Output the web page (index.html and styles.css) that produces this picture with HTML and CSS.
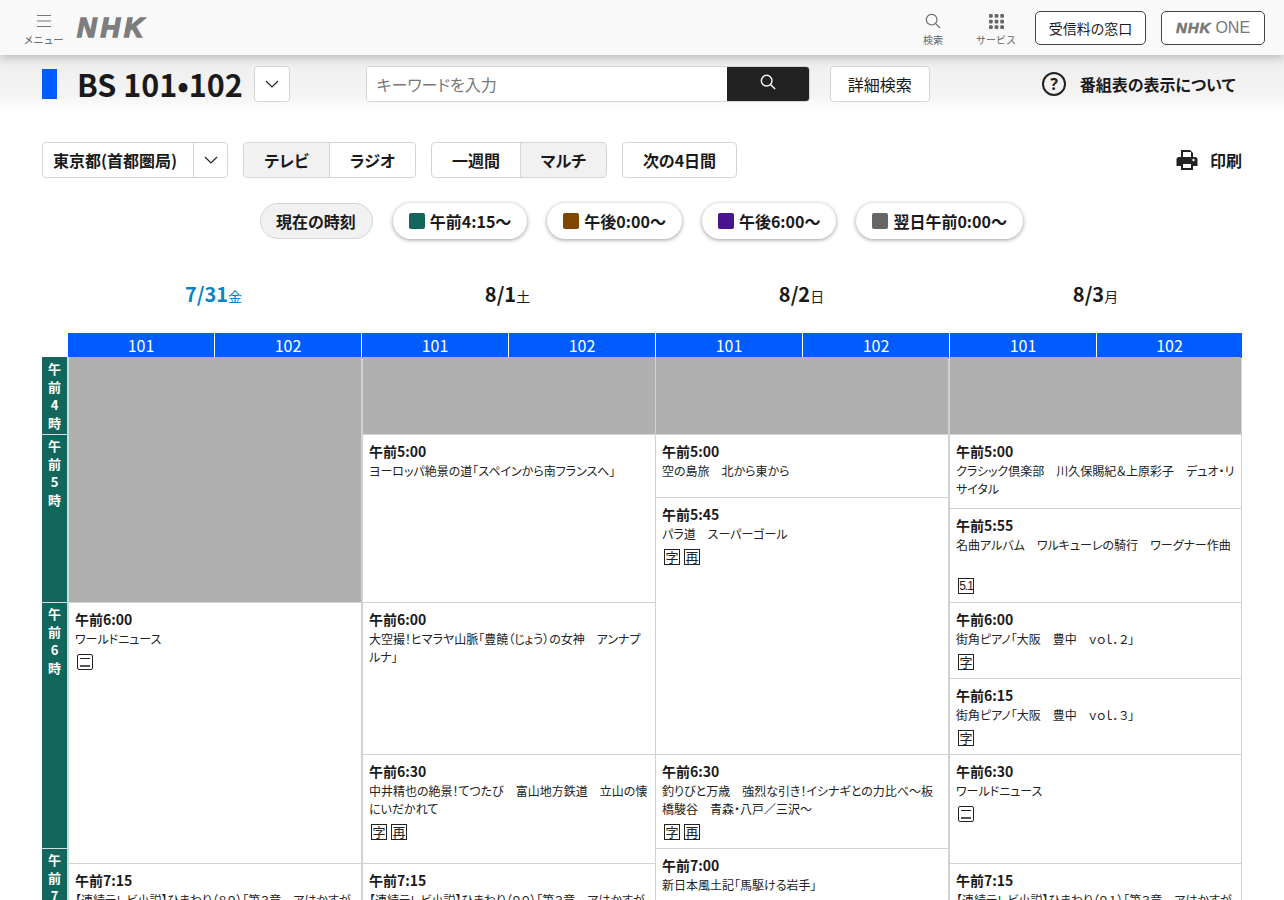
FILE: index.html
```html
<!DOCTYPE html>
<html lang="ja">
<head>
  <meta charset="UTF-8">
  <title>番組表 BS 101・102</title>
  <link rel="stylesheet" href="styles.css">
</head>
<body>

  <header class="top-bar">
    <div class="menu-btn">
      <svg width="14" height="14" viewBox="0 0 14 14"><path d="M0 1.5h14M0 7h14M0 12.5h14" stroke="#777" stroke-width="1.2" fill="none"/></svg>
      <span>メニュー</span>
    </div>
    <span class="nhk-logo">NHK</span>
    <div class="top-right">
      <div class="top-icon search-icon">
        <svg width="16" height="16" viewBox="0 0 18 18"><circle cx="7.5" cy="7.5" r="6" stroke="#666" stroke-width="1.3" fill="none"/><path d="M12 12l5 5" stroke="#666" stroke-width="1.3"/></svg>
        <span>検索</span>
      </div>
      <div class="top-icon service-icon">
        <svg width="15" height="15" viewBox="0 0 16 16" fill="#666"><rect width="4" height="4" rx="1"/><rect x="6" width="4" height="4" rx="1"/><rect x="12" width="4" height="4" rx="1"/><rect y="6" width="4" height="4" rx="1"/><rect x="6" y="6" width="4" height="4" rx="1"/><rect x="12" y="6" width="4" height="4" rx="1"/><rect y="12" width="4" height="4" rx="1"/><rect x="6" y="12" width="4" height="4" rx="1"/><rect x="12" y="12" width="4" height="4" rx="1"/></svg>
        <span>サービス</span>
      </div>
      <a class="outline-btn fee-btn">受信料の窓口</a>
      <a class="outline-btn one-btn"><b>NHK</b> ONE</a>
    </div>
  </header>

  <section class="sub-bar">
    <span class="channel-mark"></span>
    <h1>BS 101•102</h1>
    <button class="chevron-btn"><svg width="14" height="8" viewBox="0 0 14 8"><path d="M1 1l6 6 6-6" stroke="#222" stroke-width="1.2" fill="none"/></svg></button>
    <div class="search-box">
      <input type="text" placeholder="キーワードを入力">
      <button class="search-submit"><svg width="16" height="16" viewBox="0 0 18 18"><circle cx="7.5" cy="7.5" r="6" stroke="#fff" stroke-width="1.6" fill="none"/><path d="M12 12l5 5" stroke="#fff" stroke-width="1.6"/></svg></button>
    </div>
    <button class="detail-btn">詳細検索</button>
    <div class="about-link">
      <svg width="24" height="24" viewBox="0 0 24 24"><circle cx="12" cy="12" r="11" stroke="#222" stroke-width="2" fill="none"/><text x="12" y="17.5" text-anchor="middle" class="help-mark">?</text></svg>
      <span>番組表の表示について</span>
    </div>
  </section>

  <section class="controls">
    <div class="btn-group area-select">
      <span class="area-name">東京都(首都圏局)</span>
      <span class="area-arrow"><svg width="14" height="8" viewBox="0 0 14 8"><path d="M1 1l6 6 6-6" stroke="#222" stroke-width="1.2" fill="none"/></svg></span>
    </div>
    <div class="btn-group media-group">
      <span class="seg active tv">テレビ</span>
      <span class="seg radio">ラジオ</span>
    </div>
    <div class="btn-group range-group">
      <span class="seg week">一週間</span>
      <span class="seg active multi">マルチ</span>
    </div>
    <div class="btn-group next-btn"><span class="seg">次の4日間</span></div>
    <div class="print-link">
      <svg width="22" height="22" viewBox="0 0 22 22"><path d="M5 1h9l3 3v5H5z" fill="#222"/><rect x="7" y="3" width="8" height="5" fill="#fff"/><path d="M3 8h16a2.500 2.500 0 0 1 2.500 2.500V17H17v4H5v-4H.5v-6.500A2.500 2.500 0 0 1 3 8z" fill="#222"/><rect x="7" y="15" width="8" height="4" fill="#fff"/><circle cx="17.500" cy="11" r="1.200" fill="#fff"/></svg>
      <span>印刷</span>
    </div>
  </section>

  <nav class="time-jump">
    <span class="pill now">現在の時刻</span>
    <span class="pill"><i class="swatch morning"></i>午前4:15〜</span>
    <span class="pill"><i class="swatch noon"></i>午後0:00〜</span>
    <span class="pill"><i class="swatch evening"></i>午後6:00〜</span>
    <span class="pill"><i class="swatch night"></i>翌日午前0:00〜</span>
  </nav>

  <div class="date-row">
    <div class="date today">7/31<small>金</small></div>
    <div class="date">8/1<small>土</small></div>
    <div class="date">8/2<small>日</small></div>
    <div class="date">8/3<small>月</small></div>
  </div>

  <div class="channel-row">
    <div class="channel-pair"><span>101</span><span>102</span></div>
    <div class="channel-pair"><span>101</span><span>102</span></div>
    <div class="channel-pair"><span>101</span><span>102</span></div>
    <div class="channel-pair"><span>101</span><span>102</span></div>
  </div>

  <div class="schedule">
    <div class="hours">
      <div class="hour" style="height:77px">午<br>前<br>4<br>時</div>
      <div class="hour" style="height:168px">午<br>前<br>5<br>時</div>
      <div class="hour" style="height:246px">午<br>前<br>6<br>時</div>
      <div class="hour" style="height:120px">午<br>前<br>7<br>時</div>
    </div>

    <div class="day">
      <div class="blank" style="height:245px"></div>
      <div class="prog" style="height:261px">
        <div class="time">午前6:00</div>
        <div class="name">ワールドニュース</div>
        <div class="marks"><span class="mark ni"></span></div>
      </div>
      <div class="prog" style="height:100px">
        <div class="time">午前7:15</div>
        <div class="name">【連続テレビ小説】ひまわり（８９）「第３章　アはかすが</div>
      </div>
    </div>

    <div class="day">
      <div class="blank" style="height:77px"></div>
      <div class="prog" style="height:168px">
        <div class="time">午前5:00</div>
        <div class="name">ヨーロッパ絶景の道「スペインから南フランスへ」</div>
      </div>
      <div class="prog" style="height:152px">
        <div class="time">午前6:00</div>
        <div class="name">大空撮！ヒマラヤ山脈「豊饒（じょう）の女神　アンナプルナ」</div>
      </div>
      <div class="prog" style="height:109px">
        <div class="time">午前6:30</div>
        <div class="name">中井精也の絶景！てつたび　富山地方鉄道　立山の懐にいだかれて</div>
        <div class="marks"><span class="mark">字</span><span class="mark">再</span></div>
      </div>
      <div class="prog" style="height:100px">
        <div class="time">午前7:15</div>
        <div class="name">【連続テレビ小説】ひまわり（９０）「第３章　アはかすが</div>
      </div>
    </div>

    <div class="day">
      <div class="blank" style="height:77px"></div>
      <div class="prog" style="height:63px">
        <div class="time">午前5:00</div>
        <div class="name">空の島旅　北から東から</div>
      </div>
      <div class="prog" style="height:257px">
        <div class="time">午前5:45</div>
        <div class="name">パラ道　スーパーゴール</div>
        <div class="marks"><span class="mark">字</span><span class="mark">再</span></div>
      </div>
      <div class="prog" style="height:94px">
        <div class="time">午前6:30</div>
        <div class="name">釣りびと万歳　強烈な引き！イシナギとの力比べ〜板橋駿谷　青森・八戸／三沢〜</div>
        <div class="marks"><span class="mark">字</span><span class="mark">再</span></div>
      </div>
      <div class="prog" style="height:100px">
        <div class="time">午前7:00</div>
        <div class="name">新日本風土記「馬駆ける岩手」</div>
      </div>
    </div>

    <div class="day">
      <div class="blank" style="height:77px"></div>
      <div class="prog" style="height:74px">
        <div class="time">午前5:00</div>
        <div class="name">クラシック倶楽部　川久保賜紀＆上原彩子　デュオ・リサイタル</div>
      </div>
      <div class="prog" style="height:94px">
        <div class="time">午前5:55</div>
        <div class="name">名曲アルバム　ワルキューレの騎行　ワーグナー作曲</div>
        <div class="marks push"><span class="mark small">5.1</span></div>
      </div>
      <div class="prog" style="height:76px">
        <div class="time">午前6:00</div>
        <div class="name">街角ピアノ「大阪　豊中　ｖｏｌ．２」</div>
        <div class="marks"><span class="mark">字</span></div>
      </div>
      <div class="prog" style="height:76px">
        <div class="time">午前6:15</div>
        <div class="name">街角ピアノ「大阪　豊中　ｖｏｌ．３」</div>
        <div class="marks"><span class="mark">字</span></div>
      </div>
      <div class="prog" style="height:109px">
        <div class="time">午前6:30</div>
        <div class="name">ワールドニュース</div>
        <div class="marks"><span class="mark ni"></span></div>
      </div>
      <div class="prog" style="height:100px">
        <div class="time">午前7:15</div>
        <div class="name">【連続テレビ小説】ひまわり（９１）「第３章　アはかすが</div>
      </div>
    </div>
  </div>

</body>
</html>
```
FILE: styles.css
```css
html, body {
  height: 900px;
  overflow: hidden;
}
body {
  margin: 0;
  background: #fff;
  color: #1a1a1a;
  font-family: "Noto Sans CJK JP", "Noto Sans", sans-serif;
  font-feature-settings: "palt";
}
button {
  font-family: inherit;
  font-feature-settings: inherit;
  padding: 0;
}

/* top bar */
.top-bar {
  position: relative;
  z-index: 2;
  display: flex;
  align-items: center;
  height: 55px;
  padding: 0 19px 0 24px;
  box-sizing: border-box;
  background: #f9f9f9;
  box-shadow: 0 2px 10px rgba(0, 0, 0, 0.25);
}
.menu-btn {
  display: flex;
  flex-direction: column;
  align-items: center;
  width: 39px;
  padding-top: 5px;
  gap: 5px;
  font-size: 10px;
  font-feature-settings: normal;
  line-height: 14px;
  color: #555;
  white-space: nowrap;
}
.nhk-logo {
  margin-left: 14px;
  font-family: "Liberation Sans", sans-serif;
  font-size: 27px;
  line-height: 30px;
  font-weight: 700;
  font-style: italic;
  color: #7d7d7d;
  letter-spacing: 4px;
  -webkit-text-stroke: 1.5px #7d7d7d;
}
.top-right {
  display: flex;
  align-items: center;
  margin-left: auto;
}
.top-icon {
  display: flex;
  flex-direction: column;
  align-items: center;
  padding-top: 5px;
  gap: 4px;
  font-size: 10px;
  font-feature-settings: normal;
  line-height: 14px;
  color: #666;
}
.search-icon {
  margin-right: 33px;
}
.service-icon {
  margin-right: 19px;
}
.outline-btn {
  display: flex;
  align-items: center;
  justify-content: center;
  height: 34px;
  box-sizing: border-box;
  border: 1px solid #444;
  border-radius: 5px;
  background: #fff;
  font-size: 14px;
}
.fee-btn {
  width: 111px;
  margin-right: 15px;
}
.one-btn {
  width: 104px;
  color: #777;
  font-family: "Liberation Sans", sans-serif;
  font-size: 16px;
}
.one-btn b {
  font-style: italic;
  font-size: 15px;
  letter-spacing: 1px;
  margin-right: 4px;
  -webkit-text-stroke: 0.6px #777;
}

/* channel bar */
.sub-bar {
  display: flex;
  align-items: center;
  height: 58px;
  padding-left: 42px;
  background: linear-gradient(#eee, #f4f4f4 70%, #fff);
}
.channel-mark {
  width: 15px;
  height: 30px;
  background: #005cff;
}
.sub-bar h1 {
  margin: 0 11px 0 20px;
  font-size: 30.5px;
  line-height: 36px;
  font-weight: 700;
  white-space: nowrap;
}
.chevron-btn {
  display: flex;
  align-items: center;
  justify-content: center;
  width: 36px;
  height: 36px;
  border: 1px solid #d4d4d4;
  border-radius: 4px;
  background: #fff;
}
.search-box {
  display: flex;
  width: 444px;
  height: 36px;
  margin-left: 76px;
  box-sizing: border-box;
  border: 1px solid #d4d4d4;
  border-radius: 4px;
  overflow: hidden;
  background: #fff;
}
.search-box input {
  flex: 1;
  min-width: 0;
  border: 0;
  padding: 0 10px;
  font-family: inherit;
  font-feature-settings: inherit;
  font-size: 16px;
  background: #fff;
}
.search-box input::placeholder {
  color: #777;
}
.search-submit {
  width: 82px;
  border: 0;
  background: #222;
}
.detail-btn {
  width: 100px;
  height: 36px;
  margin-left: 20px;
  border: 1px solid #d4d4d4;
  border-radius: 4px;
  background: #fff;
  color: #1a1a1a;
  font-size: 16px;
}
.about-link {
  display: flex;
  align-items: center;
  gap: 14px;
  margin-left: 112px;
  font-size: 16px;
  font-weight: 700;
}
.help-mark {
  font-family: "Noto Sans", sans-serif;
  font-size: 16px;
  font-weight: 700;
  fill: #222;
}

/* controls */
.controls {
  display: flex;
  align-items: center;
  margin: 29px 42px 0;
}
.btn-group {
  display: flex;
  height: 36px;
  box-sizing: border-box;
  border: 1px solid #d4d4d4;
  border-radius: 4px;
  background: #fff;
  font-size: 16px;
  font-weight: 700;
  overflow: hidden;
}
.seg {
  display: flex;
  align-items: center;
  justify-content: center;
  height: 100%;
}
.seg.active {
  background: #f1f1f1;
}
.area-select {
  width: 186px;
}
.area-name {
  display: flex;
  align-items: center;
  width: 151px;
  box-sizing: border-box;
  padding-left: 10px;
  border-right: 1px solid #d4d4d4;
  white-space: nowrap;
}
.area-arrow {
  display: flex;
  align-items: center;
  justify-content: center;
  flex: 1;
}
.media-group {
  width: 173px;
  margin-left: 15px;
}
.tv {
  width: 85px;
  border-right: 1px solid #d4d4d4;
}
.radio {
  flex: 1;
}
.range-group {
  width: 176px;
  margin-left: 15px;
}
.week {
  width: 88px;
  border-right: 1px solid #d4d4d4;
}
.multi {
  flex: 1;
}
.next-btn {
  width: 115px;
  margin-left: 15px;
  justify-content: center;
}
.print-link {
  display: flex;
  align-items: center;
  gap: 12px;
  margin-left: auto;
  font-size: 16px;
  font-weight: 700;
}

/* jump pills */
.time-jump {
  display: flex;
  justify-content: center;
  gap: 20px;
  margin: 25px 0 0 -1px;
}
.pill {
  display: flex;
  align-items: center;
  height: 36px;
  box-sizing: border-box;
  padding: 0 16px;
  border-radius: 18px;
  background: #fff;
  box-shadow: 0 1px 4px rgba(0, 0, 0, 0.4);
  font-size: 16px;
  font-weight: 700;
  white-space: nowrap;
}
.pill.now {
  padding: 0 16px 0 15px;
  background: #f1f1f1;
  border: 1px solid #d4d4d4;
  box-shadow: none;
}
.swatch {
  width: 16px;
  height: 16px;
  margin-right: 5px;
  border-radius: 2px;
}
.morning { background: #12665c; }
.noon { background: #7f4700; }
.evening { background: #4a148c; }
.night { background: #666; }

/* dates */
.date-row {
  display: grid;
  grid-template-columns: repeat(4, 293px);
  gap: 1px;
  margin: 38px 0 0 67px;
}
.date {
  height: 34px;
  line-height: 34px;
  text-align: center;
  font-size: 20px;
  font-weight: 700;
}
.date small {
  font-size: 14px;
  font-weight: 400;
}
.date.today {
  color: #0b84c6;
}

/* channels */
.channel-row {
  display: grid;
  grid-template-columns: repeat(3, 293px) 292px;
  gap: 1px;
  margin: 22px 0 0 68px;
}
.channel-pair {
  display: grid;
  grid-template-columns: 146px 1fr;
  gap: 1px;
  height: 24px;
  background: #fff;
}
.channel-pair span {
  background: #005cff;
  color: #fff;
  text-align: center;
  font-size: 16px;
  line-height: 25px;
}

/* schedule */
.schedule {
  display: flex;
  margin-left: 42px;
  width: 1200px;
  background: #d2d2d2;
}
.hours {
  flex: none;
  width: 27px;
  box-sizing: border-box;
  border-right: 2px solid #c8dcdc;
}
.hour {
  box-sizing: border-box;
  padding-top: 2px;
  border-top: 1px solid #cfe0de;
  background: #12665c;
  color: #fff;
  text-align: center;
  font-size: 13px;
  line-height: 18px;
  font-weight: 700;
}
.hour:first-child {
  border-top-color: #12665c;
}
.day {
  flex: none;
  width: 292px;
  margin-right: 2px;
}
.day:nth-child(3) {
  margin-right: 1px;
}
.day:last-child {
  width: 291px;
  margin-right: 0;
}
.blank {
  background: #b0b0b0;
}
.prog {
  display: flex;
  flex-direction: column;
  box-sizing: border-box;
  padding: 6px 6px 0 6px;
  border-top: 1px solid #d2d2d2;
  background: #fff;
  overflow: hidden;
}
.time {
  font-size: 14px;
  line-height: 20px;
  font-weight: 700;
}
.name {
  margin-top: 1px;
  font-size: 12px;
  line-height: 18px;
  color: #222;
}
.marks {
  display: flex;
  gap: 4px;
  margin: 6px 0 0 2px;
}
.marks.push {
  margin-top: 24px;
}
.mark {
  display: flex;
  align-items: center;
  justify-content: center;
  width: 16px;
  height: 16px;
  box-sizing: border-box;
  border: 1px solid #222;
  font-size: 13px;
  line-height: 14px;
  color: #222;
}
.mark.small {
  font-family: "Liberation Sans", sans-serif;
  font-size: 12px;
  letter-spacing: -1px;
}
.mark.ni {
  position: relative;
  border-radius: 2px;
}
.mark.ni::before {
  content: '';
  position: absolute;
  left: 2px;
  right: 2px;
  top: 3px;
  height: 6px;
  border-top: 1px solid #222;
  border-bottom: 2px solid #555;
}
```
